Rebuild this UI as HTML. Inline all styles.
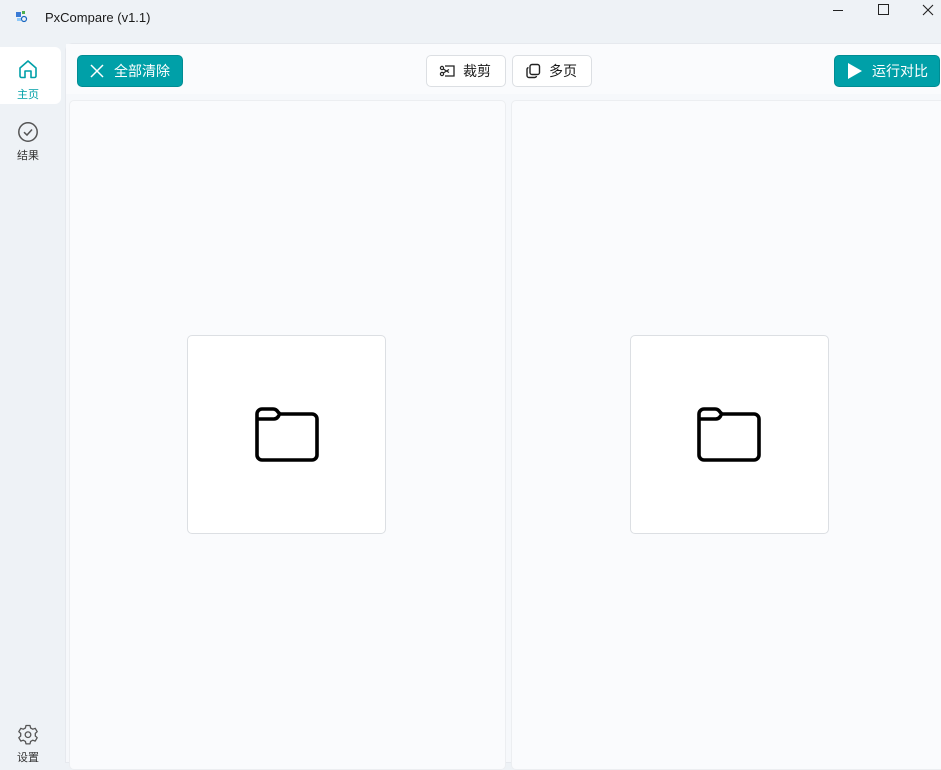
<!DOCTYPE html>
<html><head><meta charset="utf-8"><style>
*{box-sizing:border-box;margin:0;padding:0}
body{width:941px;height:759px;overflow:hidden;background:#eef2f6;font-family:"Liberation Sans","Noto Sans CJK SC",sans-serif;position:relative}
.abs{position:absolute}
.title{left:45px;top:10px;font-size:13px;color:#1a1a1a}
.nav{left:0;width:56px;text-align:center;font-size:11px;color:#333}
.main{left:65px;top:43px;width:880px;height:720px;background:#f6f8fb;border-top-left-radius:8px;border:1px solid #e6e9ee}
.tool{left:66px;top:44px;width:875px;height:50px;background:#fafbfd}
.btn{height:32px;top:55px;border-radius:5px;font-size:14px;display:flex;align-items:center}
.teal{background:#00a0a8;color:#fff;border:1px solid #008c93}
.wht{background:#fff;border:1px solid #dcdfe3;color:#1a1a1a}
.panel{top:100px;height:670px;background:#fafbfd;border:1px solid #eceef1;border-radius:5px}
.box{width:199px;height:199px;top:335px;background:#fff;border:1px solid #dcdfe3;border-radius:5px}
</style></head><body>
<svg class="abs" style="left:15px;top:10px" width="14" height="14" viewBox="0 0 14 14"><rect x="1" y="2" width="5" height="5" fill="#3a7bd5"/><rect x="7" y="1" width="3" height="3" fill="#4caf50"/><rect x="2" y="8" width="4" height="3" fill="#90caf9"/><circle cx="9" cy="9" r="2.5" fill="none" stroke="#1565c0" stroke-width="1.2"/></svg>
<div class="abs title">PxCompare (v1.1)</div>
<div class="abs" style="left:833px;top:10px;width:10px;height:1px;background:#222"></div>
<div class="abs" style="left:878px;top:4px;width:11px;height:11px;border:1px solid #222"></div>
<svg class="abs" style="left:922px;top:4px" width="12" height="12" viewBox="0 0 12 12"><path d="M1 1L11 11M11 1L1 11" stroke="#222" stroke-width="1.1"/></svg>

<div class="abs" style="left:0;top:47px;width:61px;height:57px;background:#fff;border-radius:0 6px 6px 0"></div>
<svg class="abs" style="left:17px;top:58px" width="22" height="22" viewBox="0 0 22 22"><path d="M3 10 L11 3 L19 10 V18 a1.5 1.5 0 0 1 -1.5 1.5 H14 V13 H8 V19.5 H4.5 A1.5 1.5 0 0 1 3 18 Z" fill="none" stroke="#00a0a8" stroke-width="1.6" stroke-linejoin="round"/></svg>
<div class="abs nav" style="top:86px;color:#00a0a8">主页</div>
<svg class="abs" style="left:17px;top:121px" width="22" height="22" viewBox="0 0 22 22"><circle cx="11" cy="11" r="9.2" fill="none" stroke="#555" stroke-width="1.5"/><path d="M7 11.2 L10 14 L15 8.5" fill="none" stroke="#555" stroke-width="1.5"/></svg>
<div class="abs nav" style="top:147px">结果</div>
<svg class="abs" style="left:17px;top:723px" width="22" height="22" viewBox="0 0 22 22"><path d="M9 2.5h4l.6 2.5 2.2 1.2 2.4-.9 2 3.4-1.9 1.7v2.6l1.9 1.7-2 3.4-2.4-.9-2.2 1.2-.6 2.5H9l-.6-2.5-2.2-1.2-2.4.9-2-3.4 1.9-1.7V10.4L1.8 8.7l2-3.4 2.4.9 2.2-1.2z" fill="none" stroke="#555" stroke-width="1.3" stroke-linejoin="round"/><circle cx="11" cy="11.7" r="2.8" fill="none" stroke="#555" stroke-width="1.3"/></svg>
<div class="abs nav" style="top:749px">设置</div>

<div class="abs main"></div>
<div class="abs tool"></div>
<div class="abs btn teal" style="left:77px;width:106px"><svg style="margin:0 9px 0 11px" width="16" height="16" viewBox="0 0 16 16"><path d="M2 2L14 14M14 2L2 14" stroke="#fff" stroke-width="1.5"/></svg>全部清除</div>
<div class="abs btn wht" style="left:426px;width:80px"><svg style="margin:0 8px 0 12px" width="16" height="16" viewBox="0 0 16 16"><path d="M6 3H15V13H6" fill="none" stroke="#222" stroke-width="1.3"/><circle cx="3" cy="5" r="1.6" fill="none" stroke="#222" stroke-width="1.2"/><circle cx="3" cy="11" r="1.6" fill="none" stroke="#222" stroke-width="1.2"/><path d="M4.3 6L10 9.5M4.3 10L10 6.5" stroke="#222" stroke-width="1.2"/></svg>裁剪</div>
<div class="abs btn wht" style="left:512px;width:80px"><svg style="margin:0 8px 0 12px" width="16" height="16" viewBox="0 0 16 16"><rect x="5" y="1.5" width="9.5" height="10" rx="2" fill="none" stroke="#222" stroke-width="1.4"/><path d="M3.5 4.5A2 2 0 0 0 2 6.5V12.5A2 2 0 0 0 4 14.5H9.5A2 2 0 0 0 11.5 13" fill="none" stroke="#222" stroke-width="1.4"/></svg>多页</div>
<div class="abs btn teal" style="left:834px;width:106px"><svg style="margin:0 8px 0 11px" width="18" height="18" viewBox="0 0 18 18"><path d="M2 1L16 9L2 17Z" fill="#fff"/></svg>运行对比</div>

<div class="abs panel" style="left:69px;width:437px"></div>
<div class="abs panel" style="left:511px;width:440px"></div>
<div class="abs box" style="left:187px"></div>
<div class="abs box" style="left:630px"></div>
<svg class="abs" style="left:254px;top:406px" width="66" height="58" viewBox="0 0 66 58"><path d="M3 8a5 5 0 0 1 5-5h11a6 6 0 0 1 5 3l2 2h32a5 5 0 0 1 5 5v36a5 5 0 0 1-5 5H8a5 5 0 0 1-5-5z M3 13H20a6 6 0 0 0 5-4" fill="none" stroke="#000" stroke-width="3.6" stroke-linejoin="round"/></svg>
<svg class="abs" style="left:696px;top:406px" width="66" height="58" viewBox="0 0 66 58"><path d="M3 8a5 5 0 0 1 5-5h11a6 6 0 0 1 5 3l2 2h32a5 5 0 0 1 5 5v36a5 5 0 0 1-5 5H8a5 5 0 0 1-5-5z M3 13H20a6 6 0 0 0 5-4" fill="none" stroke="#000" stroke-width="3.6" stroke-linejoin="round"/></svg>
</body></html>
